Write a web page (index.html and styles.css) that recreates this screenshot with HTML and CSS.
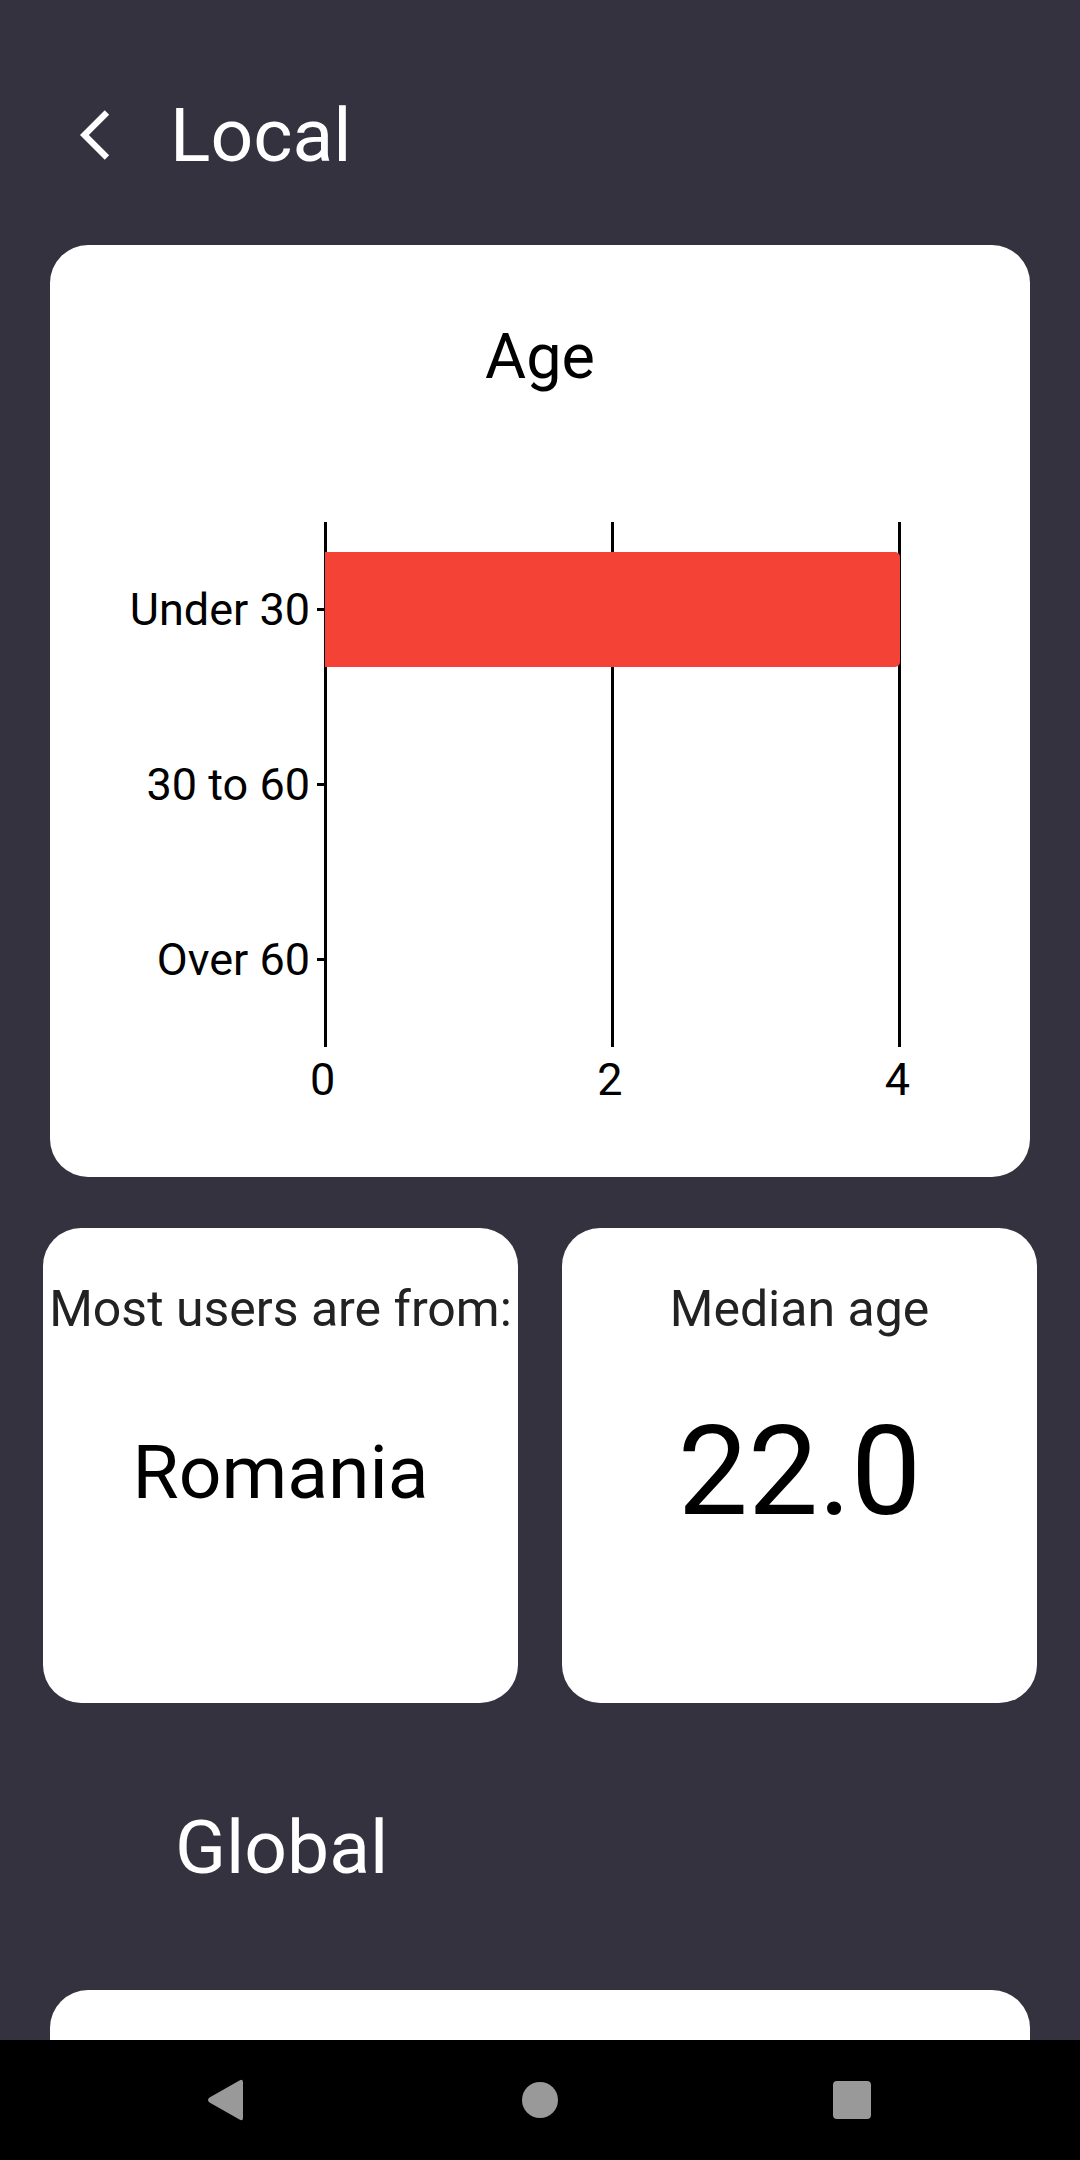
FILE: index.html
```html
<!DOCTYPE html>
<html lang="en">
<head>
  <meta charset="utf-8">
  <meta name="viewport" content="width=device-width, initial-scale=1">
  <title>Statistics</title>
  <link rel="stylesheet" href="styles.css">
</head>
<body>
  <main class="screen">
    <header class="header">
      <button class="back" type="button" aria-label="Back">
        <svg class="back-icon" viewBox="0 0 24 24" aria-hidden="true"><path d="M11.67 3.87 9.9 2.1 0 12l9.9 9.9 1.77-1.77L3.54 12z"/></svg>
      </button>
      <h1 class="heading">Local</h1>
    </header>

    <section class="card chart-card">
      <h2 class="chart-title">Age</h2>
      <div class="chart">
        <div class="labels">
          <span class="label">Under 30</span>
          <span class="label">30 to 60</span>
          <span class="label">Over 60</span>
        </div>
        <div class="ticks">
          <span class="tick"></span>
          <span class="tick"></span>
          <span class="tick"></span>
        </div>
        <div class="plot">
          <div class="gridlines">
            <span class="gridline"></span>
            <span class="gridline"></span>
            <span class="gridline"></span>
          </div>
          <div class="bars">
            <div class="row"><div class="bar" style="width: 100%"></div></div>
            <div class="row"></div>
            <div class="row"></div>
          </div>
        </div>
        <div class="axis">
          <span>0</span>
          <span>2</span>
          <span>4</span>
        </div>
      </div>
    </section>

    <section class="stats">
      <div class="card stat">
        <h2 class="stat-label">Most users are from:</h2>
        <p class="stat-value">Romania</p>
      </div>
      <div class="card stat">
        <h2 class="stat-label">Median age</h2>
        <p class="stat-value stat-number">22.0</p>
      </div>
    </section>

    <h1 class="heading global-heading">Global</h1>
    <section class="card global-card"></section>
  </main>

  <nav class="navbar" aria-label="System">
    <button class="nav-button" type="button" aria-label="Back">
      <svg class="nav-icon" viewBox="0 0 48 48" aria-hidden="true"><path d="M35.5 4.6Q39 2.4 39 6.5V41.5Q39 45.6 35.5 43.4L5.5 26.5Q2.5 24 5.5 21.5Z"/></svg>
    </button>
    <button class="nav-button" type="button" aria-label="Home">
      <svg class="nav-icon" viewBox="0 0 48 48" aria-hidden="true"><circle cx="24" cy="24" r="18"/></svg>
    </button>
    <button class="nav-button" type="button" aria-label="Recent apps">
      <svg class="nav-icon" viewBox="0 0 48 48" aria-hidden="true"><rect x="5" y="5" width="38" height="38" rx="4"/></svg>
    </button>
  </nav>
</body>
</html>
```
FILE: styles.css
```css
* {
  box-sizing: border-box;
}

body {
  display: flex;
  flex-direction: column;
  height: 100vh;
  margin: 0;
  background: #33323e;
  color: #000;
  font-family: Roboto, "Noto Sans", sans-serif;
}

h1,
h2,
p {
  margin: 0;
  font-weight: 400;
}

button {
  padding: 0;
  border: 0;
  background: none;
}

.screen {
  flex: 1;
  min-height: 0;
  overflow-y: auto;
  scrollbar-width: none;
}

.header {
  display: flex;
  align-items: center;
  gap: 30px;
  padding: 91px 80px 66px;
}

.back {
  width: 60px;
  height: 60px;
}

.back-icon {
  display: block;
  width: 60px;
  height: 60px;
  fill: #fff;
}

.heading {
  color: #fff;
  font-size: 75px;
  line-height: 88px;
}

.card {
  border-radius: 38px;
  background: #fff;
}

.chart-card {
  margin: 0 50px;
  padding: 74px 120px 71px 0;
}

.chart-title {
  margin-right: -120px;
  font-size: 63px;
  line-height: 76px;
  text-align: center;
}

.chart {
  display: grid;
  grid-template-columns: 260px 14px 1fr;
  row-gap: 7px;
  margin-top: 127px;
  font-size: 45px;
  line-height: 52px;
}

.labels,
.ticks,
.bars {
  display: grid;
  grid-template-rows: repeat(3, 175px);
  align-items: center;
}

.label {
  text-align: right;
}

.tick {
  height: 3px;
  margin-left: 7px;
  background: #000;
}

.plot {
  display: grid;
  margin-right: 9px;
}

.gridlines,
.bars {
  grid-area: 1 / 1;
}

.gridlines {
  display: flex;
  justify-content: space-between;
}

.gridline {
  width: 3px;
  background: #000;
}

.bars {
  padding: 0 1px;
}

.bar {
  height: 115px;
  border-radius: 0 5px 5px 0;
  background: #f44336;
}

.axis {
  display: flex;
  grid-column: 2 / 4;
  justify-content: space-between;
}

.stats {
  display: grid;
  grid-template-columns: 1fr 1fr;
  gap: 44px;
  padding: 51px 43px 0;
}

.stat {
  aspect-ratio: 1;
  padding-top: 49px;
  text-align: center;
}

.stat-label {
  color: #222;
  font-size: 50px;
  line-height: 64px;
  white-space: nowrap;
}

.stat-value {
  margin-top: 56px;
  font-size: 75px;
  line-height: 150px;
}

.stat-number {
  font-size: 125px;
}

.global-heading {
  padding: 100px 175px 99px;
}

.global-card {
  height: 932px;
  margin: 0 50px 50px;
}

.navbar {
  display: grid;
  grid-template-columns: repeat(3, 312px);
  justify-content: center;
  height: 120px;
  background: #000;
}

.nav-button {
  display: flex;
  align-items: center;
  justify-content: center;
}

.nav-icon {
  width: 48px;
  height: 48px;
  fill: #999;
}
```
